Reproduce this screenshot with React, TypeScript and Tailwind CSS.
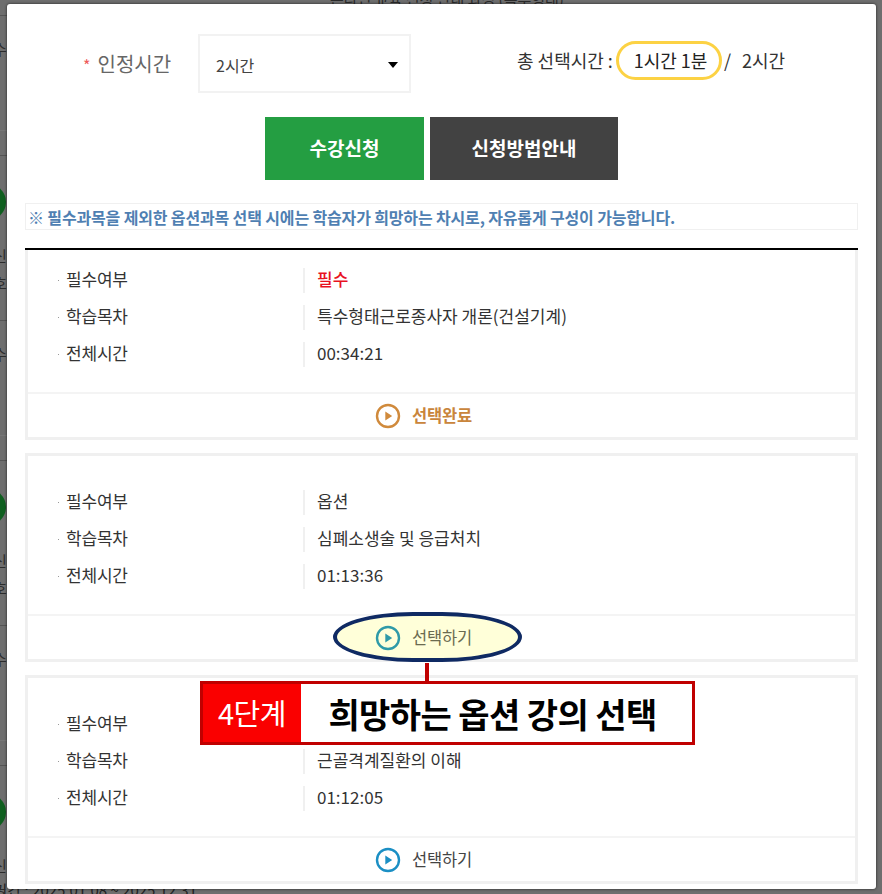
const font = { fontFamily: '"Noto Sans CJK KR", "Noto Sans", sans-serif' };

interface Course {
  required: string;
  title: string;
  time: string;
  action: string;
  color: string;
  textClass: string;
  first?: boolean;
  highlight?: boolean;
}

const courses: Course[] = [
  { required: "필수", title: "특수형태근로종사자 개론(건설기계)", time: "00:34:21", action: "선택완료", color: "#d08a3c", textClass: "text-[#c9853c] font-bold", first: true },
  { required: "옵션", title: "심폐소생술 및 응급처치", time: "01:13:36", action: "선택하기", color: "#2f9aa8", textClass: "text-[#6b6b50]", highlight: true },
  { required: "옵션", title: "근골격계질환의 이해", time: "01:12:05", action: "선택하기", color: "#1b8fc4", textClass: "text-[#444]" },
];

const backdropBlocks = [0, 305, 610];

function PlayIcon({ color }: { color: string }) {
  return (
    <svg width="26" height="26" viewBox="0 0 26 26" className="shrink-0">
      <circle cx="13" cy="13" r="11" fill="none" stroke={color} strokeWidth="2.4" />
      <path d="M10.3 8.4 L17.2 13 L10.3 17.6 Z" fill={color} />
    </svg>
  );
}

function Row({ label, children }: { label: string; children: React.ReactNode }) {
  return (
    <div className="flex items-center h-[25px] pl-[30px]">
      <span className="w-px h-px bg-[#999] mr-[7px]"></span>
      <span className="w-[237px] pb-[4px] text-[17px] tracking-[-0.2px] text-[#333]">{label}</span>
      <span className="w-[2px] h-[25px] bg-[#f0f0f0] mr-[12px]"></span>
      <span className="pb-[4px] text-[17px] text-[#333]">{children}</span>
    </div>
  );
}

function CourseCard({ course }: { course: Course }) {
  return (
    <div className={`flex flex-col border-[3px] border-[#f0f0f0] ${course.first ? "h-[190px] border-t-0 pt-[18px] mb-[13px]" : "h-[209px] pt-[34px] mb-[13px] last:mb-0"}`}>
      <div className="flex flex-col gap-[12px]">
        <Row label="필수여부">
          {course.first ? <span className="font-medium text-[#e8121f]">{course.required}</span> : course.required}
        </Row>
        <Row label="학습목차">{course.title}</Row>
        <Row label="전체시간">{course.time}</Row>
      </div>
      <div className="relative mt-auto h-[45px] border-t-2 border-[#f4f4f4] flex items-center justify-center pr-[36px]">
        {course.highlight && (
          <span className="absolute left-[305px] top-[-4px] w-[189px] h-[50px] rounded-[80px/25px] border-[4px] border-[#0f2a63] bg-[#ffffd9]"></span>
        )}
        <span className="relative flex items-center gap-[11px]">
          <PlayIcon color={course.color} />
          <span className={`text-[16.5px] tracking-[-0.2px] ${course.textClass}`}>{course.action}</span>
        </span>
      </div>
    </div>
  );
}

export default function App() {
  return (
    <div className="relative w-[882px] h-[894px] overflow-hidden bg-[#6e6e6e]" style={font}>
      {/* dimmed page behind the modal */}
      <div className="absolute left-[330px] top-[-12px] text-[15px] text-[#2a2a2a] whitespace-nowrap">
        온라인 교육 신청 안내 과정 (특수형태)
      </div>
      <div className="absolute left-[-34px] top-[879px] text-[15px] text-[#222] whitespace-nowrap">
        학습기간 : 2025.01.08 ~ 2025.12.31
      </div>
      {backdropBlocks.map((top) => (
        <div key={top} className="absolute left-0 w-[7px] h-[305px] overflow-hidden text-[15px] text-[#2c2c2c]" style={{ top }}>
          <div className="absolute left-0 top-[15px] w-full h-px bg-[#555]"></div>
          <div className="absolute left-[-7px] top-[38px]">수</div>
          <div className="absolute left-0 top-[130px] w-full h-px bg-[#777]"></div>
          <div className="absolute left-0 top-[155px] w-full h-px bg-[#555]"></div>
          <div className="absolute left-[-30px] top-[184px] w-[36px] h-[36px] rounded-full bg-[#0f5f1f]"></div>
          <div className="absolute left-[-7px] top-[245px]">신</div>
          <div className="absolute left-[-7px] top-[272px]">호</div>
        </div>
      ))}

      {/* modal */}
      <div className="absolute left-[7px] top-[4px] w-[869px] h-[885px] bg-white rounded-[3px] px-[18px] pt-[30px] shadow-[0_0_3px_rgba(0,0,0,0.7)]">
        <div className="flex items-center h-[59px]">
          <div className="w-[115px] ml-[58px] text-[20px] text-[#666] whitespace-nowrap">
            <span className="text-[#ee5a5a] text-[16px] mr-[7px]">*</span>인정시간
          </div>
          <div className="relative w-[213px] h-[59px]">
            <select className="w-full h-full appearance-none bg-white border-2 border-[#f2f2f2] pl-[16px] pt-[3px] text-[16px] text-[#444] outline-none" defaultValue="2시간">
              <option>2시간</option>
            </select>
            <span className="absolute right-[13px] top-[28px] w-0 h-0 border-x-[5px] border-x-transparent border-t-[6px] border-t-black"></span>
          </div>
          <div className="flex items-center ml-[106px] text-[18px] text-[#333] -mt-[6px] whitespace-nowrap">
            <span className="w-[96px]">총 선택시간 :</span>
            <span className="ml-[3px] w-[106px] h-[39px] pl-[3px] flex items-center justify-center rounded-full border-[3px] border-[#fcd244] text-[#222]">1시간 1분</span>
            <span className="ml-[2px]">/</span>
            <span className="ml-[11px]">2시간</span>
          </div>
        </div>

        <div className="flex justify-center gap-[6px] mt-[24px]">
          <button className="w-[159px] h-[63px] bg-[#249e42] text-white font-bold text-[19px]">수강신청</button>
          <button className="w-[188px] h-[63px] bg-[#424242] text-white font-bold text-[19px]">신청방법안내</button>
        </div>

        <div className="mt-[23px] h-[27px] border border-[#f0f0f0] pl-[2px] flex items-center text-[16px] font-bold tracking-[-0.15px] text-[#4f7fb2] whitespace-nowrap">
          ※ 필수과목을 제외한 옵션과목 선택 시에는 학습자가 희망하는 차시로, 자유롭게 구성이 가능합니다.
        </div>

        <div className="mt-[18px] h-[2px] bg-black"></div>

        {courses.map((c) => (
          <CourseCard key={c.title} course={c} />
        ))}

        {/* callout over the third card */}
        <div className="absolute left-[418px] top-[659px] w-[4px] h-[18px] bg-[#c00000]"></div>
        <div className="absolute left-[193px] top-[677px] w-[495px] h-[64px] flex border-[3px] border-[#c00000] bg-white">
          <div className="w-[98px] bg-[#fa0000] flex items-center justify-center text-white text-[29px] tracking-[-0.5px] whitespace-nowrap">4단계</div>
          <div className="flex-1 flex items-center justify-center text-black font-bold text-[34px] tracking-[-0.6px] pr-[8px] whitespace-nowrap">희망하는 옵션 강의 선택</div>
        </div>
      </div>
    </div>
  );
}
